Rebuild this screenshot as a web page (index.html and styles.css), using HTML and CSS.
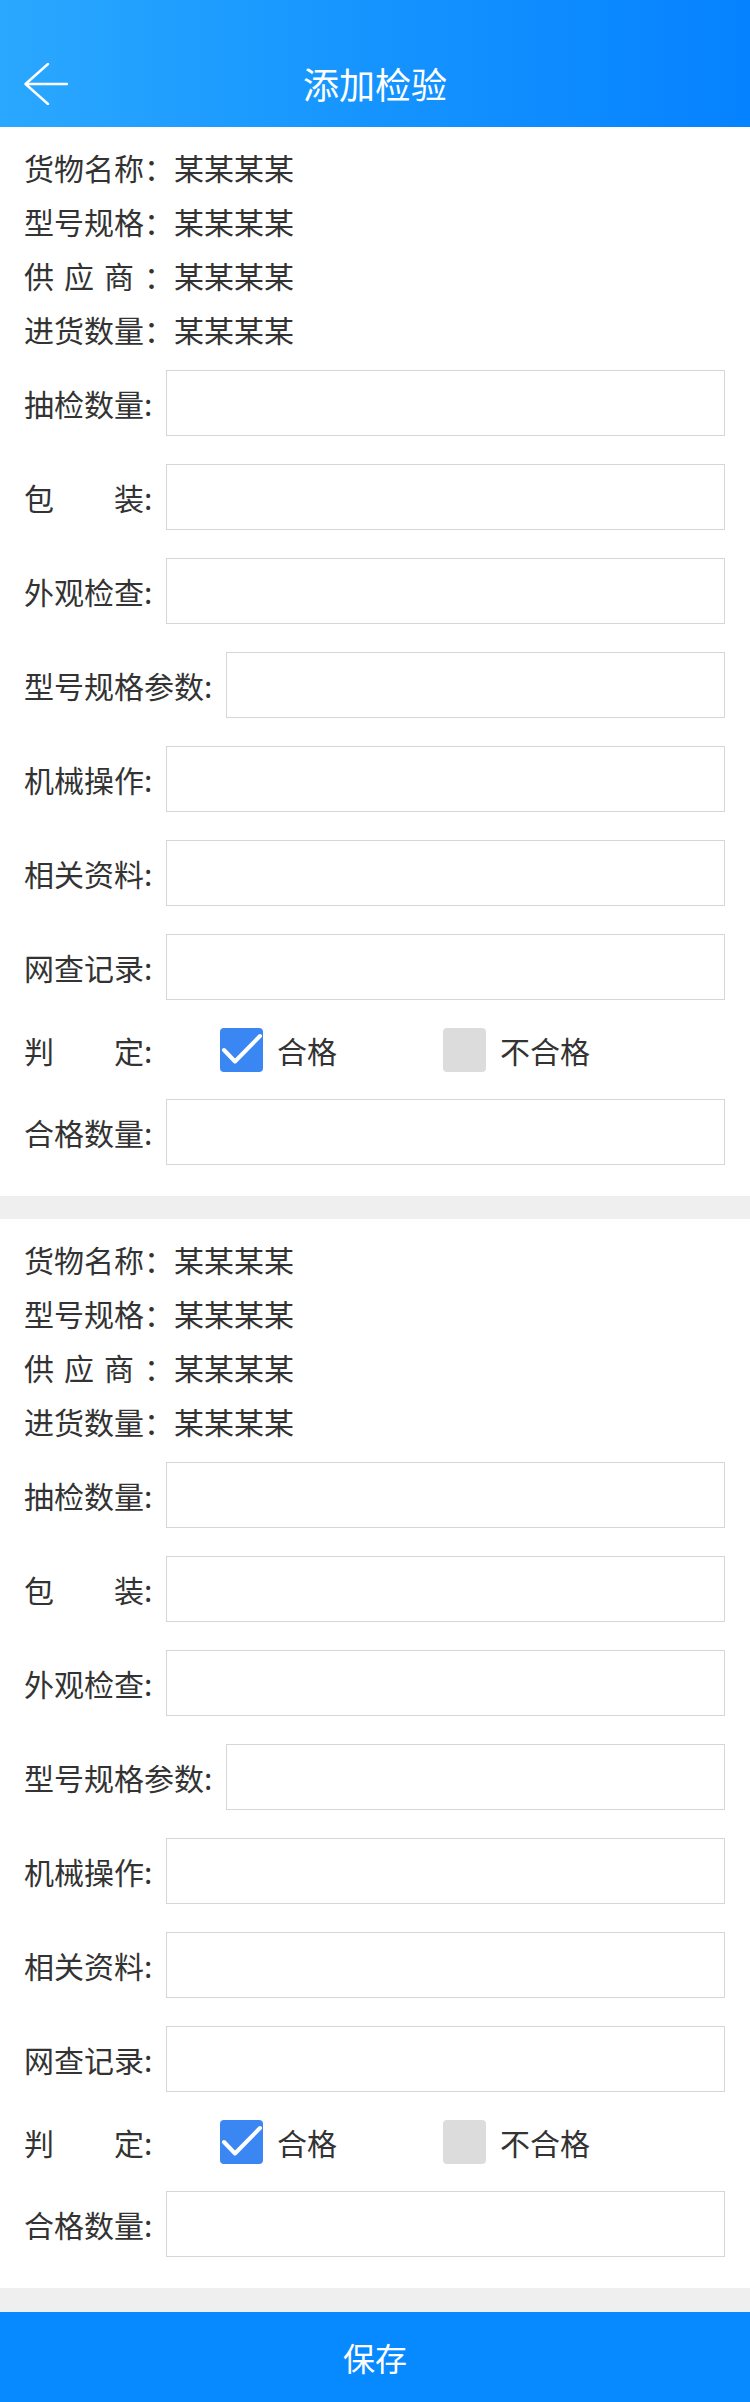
FILE: index.html
```html
<!DOCTYPE html>
<html lang="zh-CN">
<head>
<meta charset="utf-8">
<title>添加检验</title>
<link rel="stylesheet" href="styles.css">
</head>
<body>
<header class="topbar">
  <div class="topbar-left">
    <svg class="back" viewBox="0 0 44 42" width="44" height="42">
      <path d="M24 1 L1.5 21 L24 41 M1.5 21 H43" fill="none" stroke="#fff" stroke-width="2.4" stroke-linecap="round" stroke-linejoin="round"/>
    </svg>
  </div>
  <h1 class="title">添加检验</h1>
  <div class="topbar-right"></div>
</header>

<main class="page">
  <section class="card">
    <div class="info">
      <div class="info-row"><span class="info-label">货物名称：</span><span class="info-value">某某某某</span></div>
      <div class="info-row"><span class="info-label">型号规格：</span><span class="info-value">某某某某</span></div>
      <div class="info-row"><span class="info-label">供应商：</span><span class="info-value">某某某某</span></div>
      <div class="info-row"><span class="info-label">进货数量：</span><span class="info-value">某某某某</span></div>
    </div>
    <div class="form-row"><span class="lbl">抽检数量</span><span class="colon">:</span><input class="field" type="text"></div>
    <div class="form-row"><span class="lbl lbl-just">包装</span><span class="colon">:</span><input class="field" type="text"></div>
    <div class="form-row"><span class="lbl">外观检查</span><span class="colon">:</span><input class="field" type="text"></div>
    <div class="form-row"><span class="lbl">型号规格参数</span><span class="colon">:</span><input class="field" type="text"></div>
    <div class="form-row"><span class="lbl">机械操作</span><span class="colon">:</span><input class="field" type="text"></div>
    <div class="form-row"><span class="lbl">相关资料</span><span class="colon">:</span><input class="field" type="text"></div>
    <div class="form-row"><span class="lbl">网查记录</span><span class="colon">:</span><input class="field" type="text"></div>
    <div class="judge-row">
      <span class="lbl lbl-just">判定</span><span class="colon">:</span>
      <div class="options">
        <label class="option option-first">
          <span class="box box-on">
            <svg viewBox="0 0 43 44" width="43" height="44"><path d="M4 22 L15 33.5 L40 8" fill="none" stroke="#fff" stroke-width="4" stroke-linecap="round" stroke-linejoin="round"/></svg>
          </span>
          <span class="opt-text">合格</span>
        </label>
        <label class="option">
          <span class="box box-off"></span>
          <span class="opt-text">不合格</span>
        </label>
      </div>
    </div>
    <div class="form-row"><span class="lbl">合格数量</span><span class="colon">:</span><input class="field" type="text"></div>
  </section>

  <section class="card">
    <div class="info">
      <div class="info-row"><span class="info-label">货物名称：</span><span class="info-value">某某某某</span></div>
      <div class="info-row"><span class="info-label">型号规格：</span><span class="info-value">某某某某</span></div>
      <div class="info-row"><span class="info-label">供应商：</span><span class="info-value">某某某某</span></div>
      <div class="info-row"><span class="info-label">进货数量：</span><span class="info-value">某某某某</span></div>
    </div>
    <div class="form-row"><span class="lbl">抽检数量</span><span class="colon">:</span><input class="field" type="text"></div>
    <div class="form-row"><span class="lbl lbl-just">包装</span><span class="colon">:</span><input class="field" type="text"></div>
    <div class="form-row"><span class="lbl">外观检查</span><span class="colon">:</span><input class="field" type="text"></div>
    <div class="form-row"><span class="lbl">型号规格参数</span><span class="colon">:</span><input class="field" type="text"></div>
    <div class="form-row"><span class="lbl">机械操作</span><span class="colon">:</span><input class="field" type="text"></div>
    <div class="form-row"><span class="lbl">相关资料</span><span class="colon">:</span><input class="field" type="text"></div>
    <div class="form-row"><span class="lbl">网查记录</span><span class="colon">:</span><input class="field" type="text"></div>
    <div class="judge-row">
      <span class="lbl lbl-just">判定</span><span class="colon">:</span>
      <div class="options">
        <label class="option option-first">
          <span class="box box-on">
            <svg viewBox="0 0 43 44" width="43" height="44"><path d="M4 22 L15 33.5 L40 8" fill="none" stroke="#fff" stroke-width="4" stroke-linecap="round" stroke-linejoin="round"/></svg>
          </span>
          <span class="opt-text">合格</span>
        </label>
        <label class="option">
          <span class="box box-off"></span>
          <span class="opt-text">不合格</span>
        </label>
      </div>
    </div>
    <div class="form-row"><span class="lbl">合格数量</span><span class="colon">:</span><input class="field" type="text"></div>
  </section>
</main>

<button class="save" type="button">保存</button>
</body>
</html>
```

FILE: styles.css
```css
* { box-sizing: border-box; }

html, body {
  margin: 0;
  padding: 0;
}

body {
  width: 750px;
  background: #efefef;
  font-family: "Noto Sans CJK SC", "Noto Sans", sans-serif;
  color: #333;
}

.topbar {
  height: 127px;
  padding-top: 40px;
  display: grid;
  grid-template-columns: 1fr auto 1fr;
  align-items: center;
  background: linear-gradient(90deg, #2aa8ff 0%, #1594ff 50%, #0582ff 100%);
}

.topbar-left {
  padding-left: 24px;
  display: flex;
  align-items: center;
}

.back { display: block; }

.title {
  margin: 0;
  font-size: 36px;
  font-weight: 400;
  color: #fff;
  line-height: 87px;
}

.card {
  background: #fff;
  padding: 13px 25px 17px 24px;
  margin-bottom: 23px;
}

.card + .card { margin-bottom: 24px; }

.info-row {
  height: 54px;
  display: flex;
  align-items: center;
  font-size: 30px;
  line-height: 54px;
}

.info-label {
  display: inline-block;
  width: 150px;
  text-align: justify;
  text-align-last: justify;
}

.form-row {
  height: 94px;
  display: flex;
  align-items: center;
  font-size: 30px;
}

.lbl {
  white-space: nowrap;
  line-height: 40px;
}

.lbl-just {
  display: inline-block;
  width: 120px;
  text-align: justify;
  text-align-last: justify;
}

.colon {
  display: inline-block;
  width: 8px;
  line-height: 40px;
}

.field {
  flex: 1;
  min-width: 0;
  height: 66px;
  margin-left: 14px;
  border: 1px solid #d6d6d6;
  border-radius: 0;
  background: #fff;
  font-size: 28px;
  font-family: inherit;
  padding: 0 12px;
  outline: none;
}

.judge-row {
  height: 71px;
  display: flex;
  align-items: center;
  font-size: 30px;
}

.options {
  display: flex;
  align-items: center;
  margin-left: 68px;
}

.option {
  display: flex;
  align-items: center;
}

.option-first { width: 223px; }

.box {
  width: 43px;
  height: 44px;
  border-radius: 4px;
  display: block;
}

.box svg { display: block; }

.box-on { background: #3a87f3; }

.box-off { background: #dcdcdc; }

.opt-text {
  margin-left: 14px;
  line-height: 40px;
}

.save {
  display: block;
  width: 750px;
  height: 90px;
  margin: 0;
  border: 0;
  background: #0789ff;
  color: #fff;
  font-family: "Noto Sans CJK SC", "Noto Sans", sans-serif;
  font-size: 32px;
  padding: 0;
}
```
